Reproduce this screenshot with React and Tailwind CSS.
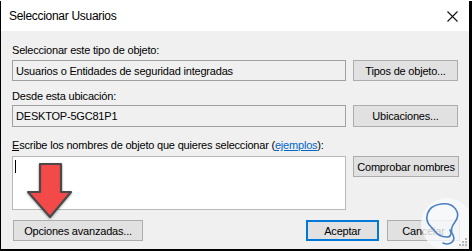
import React from "react";

function Btn({ children, className = "" }) {
  return (
    <div
      className={`h-[21px] flex items-center justify-center bg-[#e1e1e1] border border-[#adadad] text-black whitespace-nowrap ${className}`}
    >
      {children}
    </div>
  );
}

export default function App() {
  return (
    <div className="w-[472px] h-[251px] bg-black font-['Liberation_Sans',Arial,sans-serif] text-[11px] tracking-[-0.2px] leading-[16px] text-black">
      <div className="relative w-[468px] h-[248px] ml-[1px] mt-[1px] flex flex-col bg-[#f0f0f0] overflow-hidden">
        {/* Title bar */}
        <div className="h-[30px] bg-white flex items-center justify-between pl-[8px] pr-[10px] shrink-0">
          <span className="text-[12px] tracking-[-0.3px]">Seleccionar Usuarios</span>
          <svg width="11" height="11" viewBox="0 0 11 11" className="mr-[1px]">
            <path d="M0.5 0.5 L10.5 10.5 M10.5 0.5 L0.5 10.5" stroke="#111" strokeWidth="1.1" />
          </svg>
        </div>

        {/* Body */}
        <div className="flex flex-col pl-[11px] pr-[9px]">
          <div className="mt-[11px] h-[16px] whitespace-nowrap">Seleccionar este tipo de objeto:</div>
          <div className="mt-[2px] flex gap-[7px]">
            <div className="w-[334px] h-[21px] border border-[#a0a0a0] bg-[#f0f0f0] flex items-center pl-[3px] whitespace-nowrap">
              Usuarios o Entidades de seguridad integradas
            </div>
            <Btn className="w-[105px]">Tipos de objeto...</Btn>
          </div>

          <div className="mt-[7px] h-[16px] whitespace-nowrap">Desde esta ubicación:</div>
          <div className="mt-[1px] flex gap-[7px]">
            <div className="w-[334px] h-[22px] border border-[#a0a0a0] bg-[#f0f0f0] flex items-center pl-[3px]">
              DESKTOP-5GC81P1
            </div>
            <Btn className="w-[105px] h-[22px]">Ubicaciones...</Btn>
          </div>

          <div className="mt-[10px] h-[16px] whitespace-nowrap">
            <span className="underline">E</span>scribe los nombres de objeto que quieres seleccionar (
            <span className="text-[#0066cc] underline">ejemplos</span>):
          </div>
          <div className="mt-[3px] flex gap-[7px] items-start">
            <div className="w-[334px] h-[54px] border border-[#b9b9b9] bg-white pl-[2px] pt-[3px]">
              <div className="w-[1px] h-[13px] bg-black" />
            </div>
            <Btn className="w-[106px]">Comprobar nombres</Btn>
          </div>

          <div className="mt-[10px] flex items-center">
            <Btn className="w-[130px] ml-[1px]">Opciones avanzadas...</Btn>
            <div className="flex-1" />
            <div className="w-[73px] h-[21px] flex items-center justify-center bg-[#e1e1e1] border-2 border-[#0078d7]">
              Aceptar
            </div>
            <Btn className="w-[73px] ml-[8px]">Cancelar</Btn>
          </div>
        </div>

        {/* Red arrow annotation and watermark overlay */}
        <svg className="absolute left-0 top-0" width="468" height="248" viewBox="0 0 468 248" style={{ pointerEvents: "none" }}>
          <defs>
            <filter id="sh" x="-30%" y="-30%" width="160%" height="160%">
              <feDropShadow dx="0" dy="1" stdDeviation="1" floodColor="#000" floodOpacity="0.35" />
            </filter>
          </defs>
          <path
            d="M39 163 L60 163 L60 191 L70 191 L49 216 L27 191 L39 191 Z"
            fill="#f44848"
            stroke="#4a4a4a"
            strokeWidth="2.2"
            strokeLinejoin="round"
            filter="url(#sh)"
          />
          <circle cx="446" cy="223" r="26" fill="#f7fafd" fillOpacity="0.8" />
          <path
            d="M431 227 C422 219 425 205 440 203 C453 201 461 212 454 221 C450 226 449 230 452 234 C455 240 449 245 442 242"
            fill="none"
            stroke="#4d7fc1"
            strokeWidth="1.6"
            strokeLinecap="round"
          />
          <path
            d="M431 227 C435 231 437 236 446 236 C450 236 451 232 449 229"
            fill="none"
            stroke="#4d7fc1"
            strokeWidth="1.6"
            strokeLinecap="round"
          />
          <g fill="#b8b8b8">
            <rect x="464" y="237" width="2" height="2" />
            <rect x="461" y="240" width="2" height="2" />
            <rect x="464" y="240" width="2" height="2" />
            <rect x="458" y="243" width="2" height="2" />
            <rect x="461" y="243" width="2" height="2" />
            <rect x="464" y="243" width="2" height="2" />
          </g>
        </svg>
      </div>
    </div>
  );
}
